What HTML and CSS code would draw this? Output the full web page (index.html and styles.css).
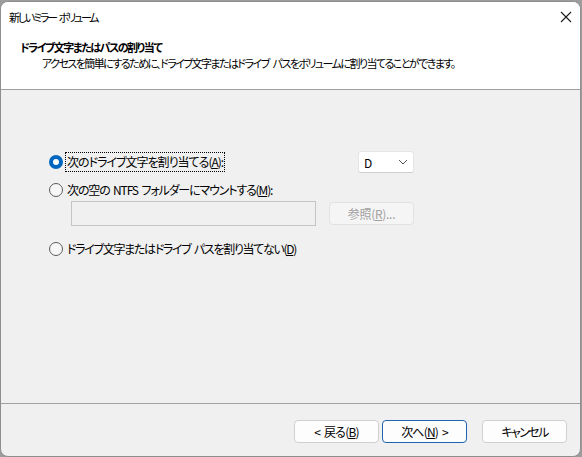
FILE: index.html
```html
<!DOCTYPE html>
<html lang="ja">
<head>
<meta charset="utf-8">
<link rel="stylesheet" href="styles.css">
</head>
<body>
<div class="window">
  <div class="titlebar">
    <span class="title">新しいミラー ボリューム</span>
    <svg class="close" width="12" height="12" viewBox="0 0 12 12"><path d="M1 1L11 11M11 1L1 11" stroke="#1a1a1a" stroke-width="1.1" fill="none"/></svg>
  </div>
  <div class="header">
    <div class="h-title">ドライブ文字またはパスの割り当て</div>
    <div class="h-sub">アクセスを簡単にするために、ドライブ文字またはドライブ パスをボリュームに割り当てることができます。</div>
  </div>
  <div class="content">
    <div class="opts">
      <div class="row row1">
        <label class="radio"><span class="dot checked"></span><span class="lbl focus">次のドライブ文字を割り当てる(<u>A</u>):</span></label>
        <div class="select"><span>D</span><svg width="10" height="6" viewBox="0 0 10 6"><path d="M1 1L5 5L9 1" stroke="#555" stroke-width="1" fill="none"/></svg></div>
      </div>
      <div class="row row2">
        <label class="radio"><span class="dot"></span><span class="lbl">次の空の NTFS フォルダーにマウントする(<u>M</u>):</span></label>
      </div>
      <div class="row row3">
        <div class="textbox"></div>
        <div class="btn disabled">参照(<u>R</u>)...</div>
      </div>
      <div class="row row4">
        <label class="radio"><span class="dot"></span><span class="lbl">ドライブ文字またはドライブ パスを割り当てない(<u>D</u>)</span></label>
      </div>
    </div>
  </div>
  <div class="footer">
    <div class="btn back">&lt; 戻る(<u>B</u>)</div>
    <div class="btn primary">次へ(<u>N</u>) &gt;</div>
    <div class="btn cancel">キャンセル</div>
  </div>
</div>
</body>
</html>
```
FILE: styles.css
```css
* { box-sizing: border-box; }
html, body { margin: 0; padding: 0; }
body {
  width: 582px;
  height: 457px;
  background: #9c9c9c;
  font-family: "Noto Sans CJK JP", "Noto Sans", sans-serif;
  font-feature-settings: "palt";
  font-size: 12px;
  color: #000;
  overflow: hidden;
}
.window {
  width: 581px;
  height: 456px;
  margin-top: 1px;
  border: 1px solid #8e8e8e;
  border-radius: 8px;
  overflow: hidden;
  background: #f0f0f0;
  display: flex;
  flex-direction: column;
}
.titlebar {
  height: 30px;
  background: #fff;
  display: flex;
  align-items: center;
  justify-content: space-between;
  padding: 0 8px 0 8px;
  flex-shrink: 0;
}
.title { line-height: 16px; font-size: 11px; letter-spacing: -2.25px; word-spacing: 3px; }
.header {
  height: 58px;
  background: #fff;
  border-bottom: 1px solid #a0a0a0;
  padding: 7px 0 0 19px;
  flex-shrink: 0;
}
.h-title { font-weight: bold; line-height: 16px; font-size: 11px; letter-spacing: -1.5px; }
.h-sub { line-height: 16px; padding-left: 22px; font-size: 11px; letter-spacing: -1.55px; word-spacing: 3px; }
.content { flex: 1; }
.opts {
  width: 365px;
  margin-left: 48px;
  padding-top: 61px;
  display: flex;
  flex-direction: column;
}
.row { display: flex; align-items: center; }
.row1 { height: 22px; justify-content: space-between; }
.row2 { height: 16px; margin-top: 9px; }
.row3 { height: 25px; margin-top: 3px; justify-content: space-between; padding-left: 22px; }
.row4 { height: 16px; margin-top: 15px; }
.radio { display: flex; align-items: center; }
.dot {
  width: 14px; height: 14px;
  border: 1px solid #5c5c5c;
  border-radius: 50%;
  background: #f7f7f7;
  margin-right: 3px;
  flex-shrink: 0;
}
.dot.checked {
  border: 4px solid #0067c0;
  background: #fff;
}
.lbl { line-height: 16px; padding: 1px 1px; letter-spacing: -1px; word-spacing: 2px; }
.row2 .lbl { letter-spacing: -1.15px; }
.row4 .lbl { letter-spacing: -1.3px; }
.lbl.focus { outline: 1px dotted #000; outline-offset: 0; }
.select {
  width: 56px; height: 22px;
  background: #fff;
  border: 1px solid #e5e5e5;
  border-bottom-color: #cfcfcf;
  border-radius: 3px;
  display: flex; align-items: center; justify-content: space-between;
  padding: 0 5px 0 5px;
}
.textbox {
  width: 245px; height: 25px;
  border: 1px solid #c4c4c4;
  background: #f0f0f0;
}
.btn {
  width: 85px; height: 23px;
  border: 1px solid #d0d0d0;
  border-radius: 4px;
  background: #fdfdfd;
  display: flex; align-items: center; justify-content: center;
  line-height: 16px;
  letter-spacing: -0.8px;
  word-spacing: 2px;
}
.btn.disabled {
  background: #f5f5f5;
  border-color: #e2e2e2;
  color: #a0a0a0;
  letter-spacing: -0.3px;
}
.btn.primary { border-color: #1f64b0; }
.btn.cancel { letter-spacing: -1.6px; }
.footer {
  height: 53px;
  border-top: 1px solid #a0a0a0;
  padding: 16px 13px 0 0;
  display: flex;
  justify-content: flex-end;
  flex-shrink: 0;
}
.footer .btn + .btn { margin-left: 3px; }
.footer .btn.cancel { margin-left: 15px; }
```
